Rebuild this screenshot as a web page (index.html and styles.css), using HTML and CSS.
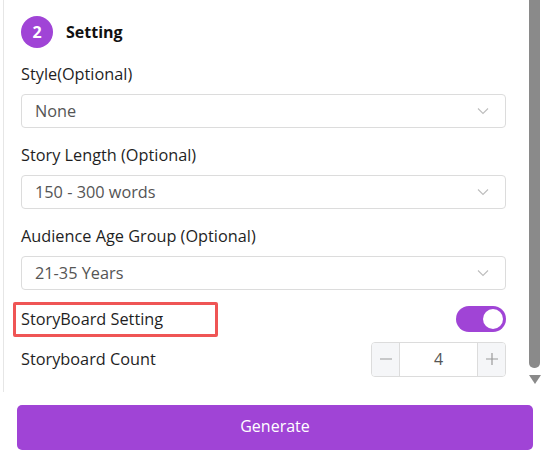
FILE: index.html
```html
<!DOCTYPE html>
<html>
<head>
<meta charset="utf-8">
<link rel="stylesheet" href="styles.css">
</head>
<body>
<div class="panel">
  <div class="content">
    <div class="step">
      <span class="badge">2</span>
      <span class="step-title">Setting</span>
    </div>
    <div class="item">
      <div class="label">Style(Optional)</div>
      <div class="select"><span>None</span><svg class="chev" width="12" height="8" viewBox="0 0 12 8"><path d="M1 1.5 L6 6.5 L11 1.5" fill="none" stroke="#bdbdbd" stroke-width="1.1"/></svg></div>
    </div>
    <div class="item">
      <div class="label">Story Length (Optional)</div>
      <div class="select"><span>150 - 300 words</span><svg class="chev" width="12" height="8" viewBox="0 0 12 8"><path d="M1 1.5 L6 6.5 L11 1.5" fill="none" stroke="#bdbdbd" stroke-width="1.1"/></svg></div>
    </div>
    <div class="item">
      <div class="label">Audience Age Group (Optional)</div>
      <div class="select"><span>21-35 Years</span><svg class="chev" width="12" height="8" viewBox="0 0 12 8"><path d="M1 1.5 L6 6.5 L11 1.5" fill="none" stroke="#bdbdbd" stroke-width="1.1"/></svg></div>
    </div>
    <div class="row row-toggle">
      <span class="marked">StoryBoard Setting</span>
      <span class="switch"><span class="knob"></span></span>
    </div>
    <div class="row row-count">
      <span class="row-label">Storyboard Count</span>
      <div class="stepper">
        <span class="step-btn"><svg width="12" height="12" viewBox="0 0 12 12"><path d="M0 6 H12" stroke="#9a9a9a" stroke-width="1.2"/></svg></span>
        <span class="step-val">4</span>
        <span class="step-btn"><svg width="12" height="12" viewBox="0 0 12 12"><path d="M0 6 H12 M6 0 V12" stroke="#9a9a9a" stroke-width="1.2"/></svg></span>
      </div>
    </div>
  </div>
  <div class="scrollbar">
    <div class="thumb"></div>
    <svg class="arrow" width="12" height="9" viewBox="0 0 12 9"><path d="M0 0 H12 L6 9 Z" fill="#8a8a8a"/></svg>
  </div>
</div>
<button class="generate">Generate</button>
</body>
</html>
```
FILE: styles.css
```css
html, body {
  margin: 0;
  padding: 0;
  background: #fff;
}
body {
  font-family: "Open Sans", "Noto Sans", sans-serif;
  color: #1f1f1f;
  width: 543px;
  height: 458px;
  overflow: hidden;
}
.panel {
  margin-left: 3px;
  border-left: 1px solid #e6e6e6;
  height: 392px;
  display: flex;
  overflow: hidden;
}
.content {
  flex: 1;
  padding: 16px 20px 0 17px;
}
.step {
  display: flex;
  align-items: center;
  height: 32px;
}
.badge {
  width: 32px;
  height: 32px;
  border-radius: 50%;
  background: #a044d6;
  color: #fff;
  font-weight: 700;
  font-size: 16px;
  display: flex;
  align-items: center;
  justify-content: center;
}
.step-title {
  margin-left: 13px;
  font-weight: 700;
  font-size: 16px;
  color: #111;
}
.item {
  margin-top: 14px;
}
.item + .item {
  margin-top: 15px;
}
.label {
  font-size: 16.3px;
  line-height: 24px;
  margin-bottom: 8px;
  color: #1f1f1f;
}
.select {
  height: 34px;
  box-sizing: border-box;
  border: 1px solid #dcdcdc;
  border-radius: 4px;
  display: flex;
  align-items: center;
  justify-content: space-between;
  padding: 0 16px 0 13px;
  font-size: 16.3px;
  color: #555;
}
.chev {
  display: block;
}
.row {
  display: flex;
  align-items: center;
  justify-content: space-between;
  font-size: 16.3px;
}
.row-toggle {
  margin-top: 12px;
  height: 34px;
}
.marked {
  margin-left: -8px;
  border: 3px solid #ef5555;
  border-radius: 2px;
  width: 205px;
  height: 35px;
  box-sizing: border-box;
  padding-left: 5px;
  display: flex;
  align-items: center;
  line-height: 1;
}
.switch {
  width: 50px;
  height: 26px;
  border-radius: 13px;
  background: #a044d6;
  display: flex;
  align-items: center;
  justify-content: flex-end;
  padding-right: 3px;
  box-sizing: border-box;
}
.knob {
  width: 20px;
  height: 20px;
  border-radius: 50%;
  background: #fff;
}
.row-count {
  margin-top: 6px;
  height: 34px;
}
.stepper {
  display: flex;
  height: 35px;
  border: 1px solid #dcdcdc;
  border-radius: 4px;
  box-sizing: border-box;
  overflow: hidden;
}
.step-btn {
  width: 27px;
  background: #f5f6f8;
  display: flex;
  align-items: center;
  justify-content: center;
}
.step-btn svg {
  display: block;
}
.step-val {
  width: 77px;
  border-left: 1px solid #dcdcdc;
  border-right: 1px solid #dcdcdc;
  display: flex;
  align-items: center;
  justify-content: center;
  color: #555;
  font-size: 16px;
}
.scrollbar {
  width: 17px;
  display: flex;
  flex-direction: column;
  align-items: center;
}
.thumb {
  width: 11px;
  height: 368px;
  background: #8a8a8a;
  border-radius: 0 0 5px 5px;
}
.arrow {
  margin-top: 7px;
  display: block;
}
.generate {
  display: block;
  margin: 13px 0 0 17px;
  width: 516px;
  height: 45px;
  border: none;
  border-radius: 5px;
  background: #a044d6;
  color: #fff;
  font-family: "Open Sans", "Noto Sans", sans-serif;
  font-size: 16px;
  padding: 0 0 3px;
}
```
